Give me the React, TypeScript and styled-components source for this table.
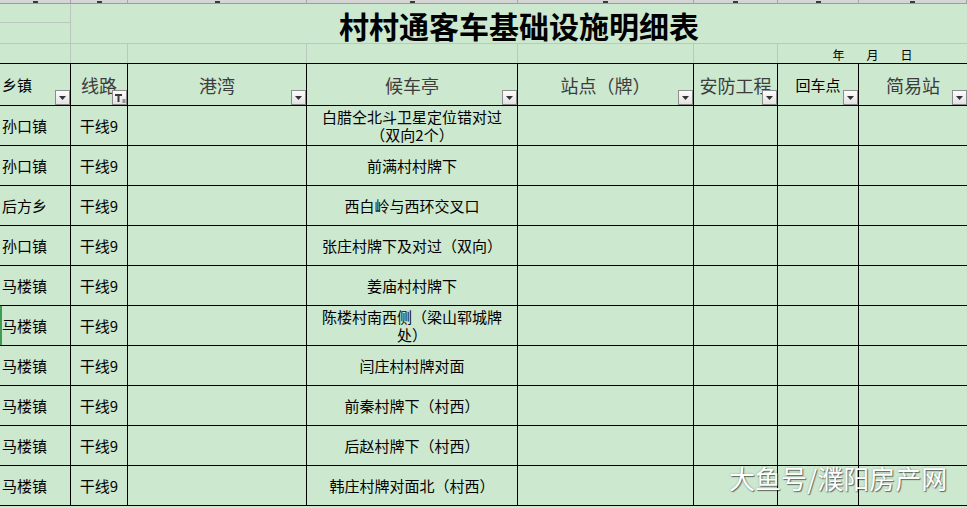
import styled, { createGlobalStyle } from "styled-components";

const COLS = "71px 57px 179px 211px 176px 84px 81px 1fr";
const GRID_GRAY = "#bcc8bd";

const GlobalStyle = createGlobalStyle`
  *, *::before, *::after { box-sizing: border-box; }
  html, body { margin: 0; padding: 0; background: #cce8cf; }
  body { font-family: "Noto Sans CJK SC", "Noto Sans", sans-serif; }
`;

const Sheet = styled.div`
  position: relative;
  width: 967px;
  height: 508px;
  overflow: hidden;
  background: #cce8cf;
  color: #000;
  font-family: "Noto Sans CJK SC", "Noto Sans", sans-serif;
`;

/* cut-off column header strip of the spreadsheet */
const ColHeads = styled.div`
  display: grid;
  grid-template-columns: ${COLS};
  height: 4px;
  background: #d5d5d5;
  border-bottom: 1px solid #9d9d9d;
`;

const ColHead = styled.div`
  display: flex;
  align-items: flex-end;
  justify-content: center;
  border-right: 1px solid #a6a6a6;

  /* bottom of the column letter peeking out */
  &::after {
    content: "";
    width: 5px;
    height: 2px;
    background: #3a3a3a;
  }
`;

const TitleBlock = styled.div`
  display: grid;
  grid-template-columns: 71px 1fr;
  grid-template-rows: 19px 21px;
`;

const SideCell = styled.div<{ $row: number }>`
  grid-column: 1;
  grid-row: ${(p) => p.$row};
  border-right: 1px solid ${GRID_GRAY};
  border-bottom: 1px solid ${GRID_GRAY};
`;

const TitleCell = styled.h1`
  grid-column: 2;
  grid-row: 1 / span 2;
  margin: 0;
  padding-top: 2px;
  display: flex;
  align-items: center;
  justify-content: center;
  border-bottom: 1px solid ${GRID_GRAY};
  font-size: 30px;
  font-weight: 700;
  color: #000;
`;

const DateRow = styled.div`
  display: grid;
  grid-template-columns: ${COLS};
  height: 20px;
  border-bottom: 1px solid #000;
`;

const DateCell = styled.div<{ $span?: number }>`
  grid-column: span ${(p) => p.$span ?? 1};
  display: flex;
  align-items: center;
  justify-content: center;
  gap: 22px;
  border-right: 1px solid ${GRID_GRAY};
  font-size: 12px;
  padding-top: 1px;

  &:last-child {
    border-right: none;
  }
`;

const Row = styled.div<{ $head?: boolean }>`
  display: grid;
  grid-template-columns: ${COLS};
  height: ${(p) => (p.$head ? 42 : 40)}px;
  border-bottom: 1px solid #000;
`;

const HeadCell = styled.div<{ $plain?: boolean; $left?: boolean }>`
  position: relative;
  display: flex;
  align-items: center;
  justify-content: ${(p) => (p.$left ? "flex-start" : "center")};
  padding-left: ${(p) => (p.$left ? 2 : 0)}px;
  border-right: 1px solid #000;
  font-size: ${(p) => (p.$plain ? 15 : 18)}px;
  color: ${(p) => (p.$plain ? "#000" : "#3d3d3d")};
  white-space: nowrap;

  &:last-child {
    border-right: none;
  }
`;

const Cell = styled.div<{ $left?: boolean; $active?: boolean }>`
  display: flex;
  align-items: center;
  justify-content: ${(p) => (p.$left ? "flex-start" : "center")};
  padding-left: ${(p) => (p.$left ? 2 : 0)}px;
  border-right: 1px solid #000;
  font-size: 15px;
  white-space: nowrap;
  box-shadow: ${(p) => (p.$active ? "inset 2px 0 0 #3f9c52" : "none")};

  &:last-child {
    border-right: none;
  }
`;

const StopText = styled.div`
  display: flex;
  flex-direction: column;
  align-items: center;
  line-height: 18px;
`;

const FilterBtn = styled.span`
  position: absolute;
  right: 0;
  bottom: 0;
  width: 15px;
  height: 15px;
  display: flex;
  align-items: center;
  justify-content: center;
  border: 1px solid #8d8d8d;
  background: linear-gradient(#fdfdfd, #e2e2e2);
`;

const Watermark = styled.div`
  position: absolute;
  left: 729px;
  top: 459px;
  font-size: 26px;
  color: #fff;
  white-space: nowrap;
  text-shadow: 1px 1px 1px rgba(0, 0, 0, 0.5), 0 0 2px rgba(0, 0, 0, 0.3);
`;

const Arrow = () => (
  <svg width="7" height="4" viewBox="0 0 7 4">
    <path d="M0 0h7L3.5 4z" fill="#333" />
  </svg>
);

const Funnel = () => (
  <svg width="12" height="12" viewBox="0 0 12 12">
    <path d="M1 2h7v2H5.5v6h-2V4H1z" fill="#3a3a3a" />
    <rect x="8.5" y="7.5" width="3" height="1" fill="#3a3a3a" />
    <rect x="8.5" y="9.5" width="3" height="1" fill="#3a3a3a" />
  </svg>
);

const headers: { label: string; plain?: boolean; left?: boolean; filtered?: boolean }[] = [
  { label: "乡镇", plain: true, left: true },
  { label: "线路", filtered: true },
  { label: "港湾" },
  { label: "候车亭" },
  { label: "站点（牌）" },
  { label: "安防工程" },
  { label: "回车点", plain: true },
  { label: "简易站" },
];

const rows: { town: string; stop: string[]; active?: boolean }[] = [
  { town: "孙口镇", stop: ["白腊仝北斗卫星定位错对过", "（双向2个）"] },
  { town: "孙口镇", stop: ["前满村村牌下"] },
  { town: "后方乡", stop: ["西白岭与西环交叉口"] },
  { town: "孙口镇", stop: ["张庄村牌下及对过（双向）"] },
  { town: "马楼镇", stop: ["姜庙村村牌下"] },
  { town: "马楼镇", stop: ["陈楼村南西侧（梁山郓城牌", "处）"], active: true },
  { town: "马楼镇", stop: ["闫庄村村牌对面"] },
  { town: "马楼镇", stop: ["前秦村牌下（村西）"] },
  { town: "马楼镇", stop: ["后赵村牌下（村西）"] },
  { town: "马楼镇", stop: ["韩庄村牌对面北（村西）"] },
];

export default function App() {
  return (
    <>
      <GlobalStyle />
      <Sheet>
        <ColHeads>
          {headers.map((h) => (
            <ColHead key={h.label} />
          ))}
        </ColHeads>

        <TitleBlock>
          <SideCell $row={1} />
          <SideCell $row={2} />
          <TitleCell>村村通客车基础设施明细表</TitleCell>
        </TitleBlock>

        <DateRow>
          <DateCell />
          <DateCell />
          <DateCell />
          <DateCell />
          <DateCell />
          <DateCell />
          <DateCell $span={2}>
            <span>年</span>
            <span>月</span>
            <span>日</span>
          </DateCell>
        </DateRow>

        <Row $head>
          {headers.map((h) => (
            <HeadCell key={h.label} $plain={h.plain} $left={h.left}>
              {h.label}
              <FilterBtn>{h.filtered ? <Funnel /> : <Arrow />}</FilterBtn>
            </HeadCell>
          ))}
        </Row>

        {rows.map((r, i) => (
          <Row key={i}>
            <Cell $left $active={r.active}>
              {r.town}
            </Cell>
            <Cell>干线9</Cell>
            <Cell />
            <Cell>
              <StopText>
                {r.stop.map((line, j) => (
                  <span key={j}>{line}</span>
                ))}
              </StopText>
            </Cell>
            <Cell />
            <Cell />
            <Cell />
            <Cell />
          </Row>
        ))}

        <Watermark>大鱼号/濮阳房产网</Watermark>
      </Sheet>
    </>
  );
}
